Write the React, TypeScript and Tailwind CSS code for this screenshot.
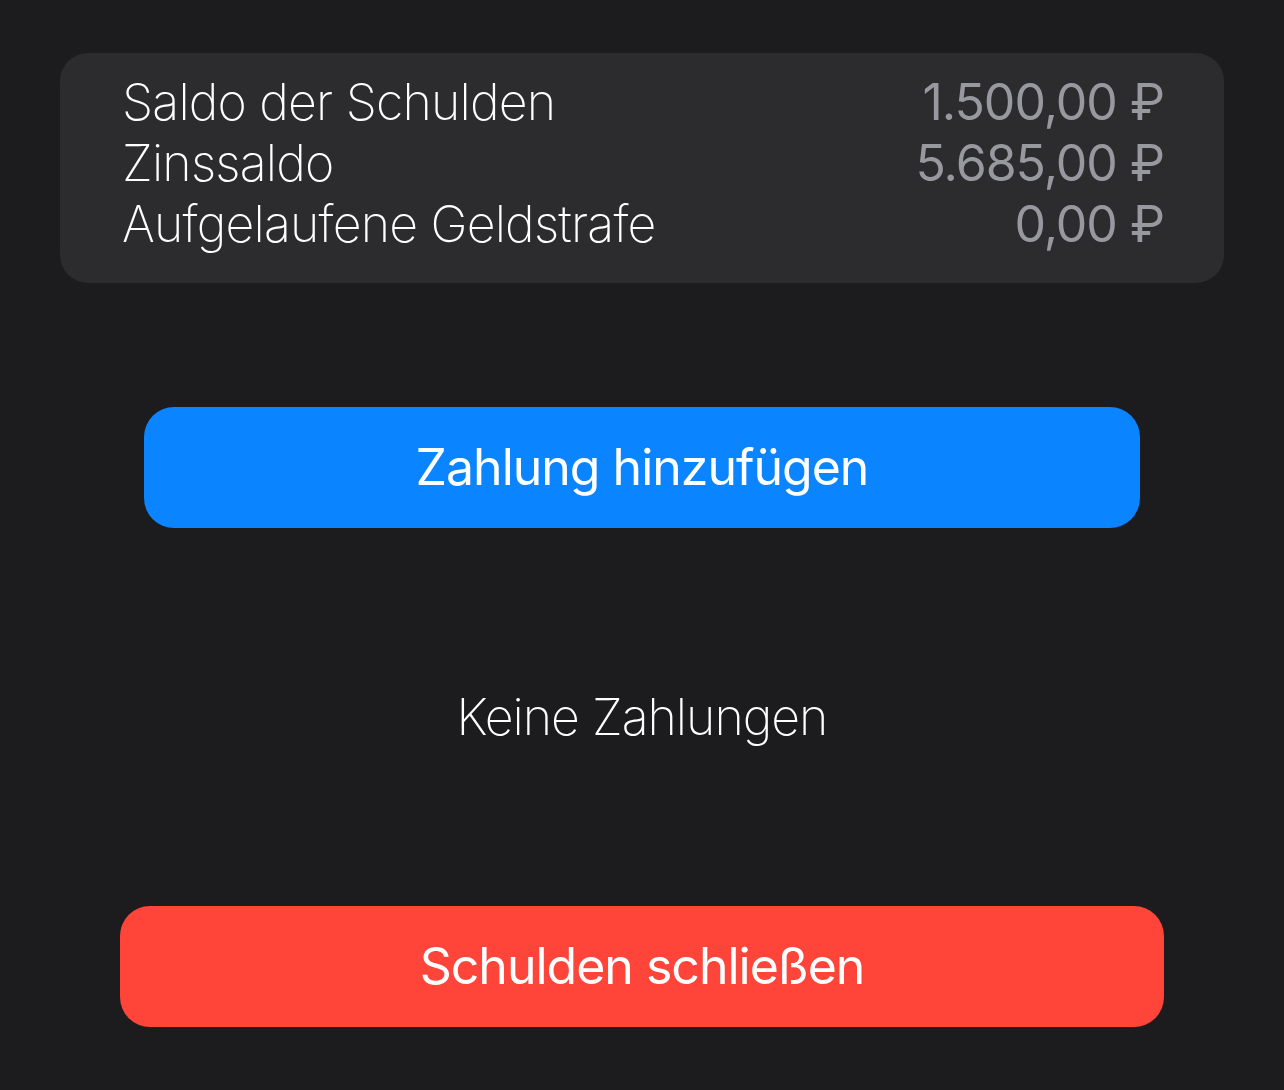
const rows = [
  { label: 'Saldo der Schulden', value: '1.500,00 ₽' },
  { label: 'Zinssaldo', value: '5.685,00 ₽' },
  { label: 'Aufgelaufene Geldstrafe', value: '0,00 ₽' },
];

const App = () => {
  return (
    <div
      className="min-h-[1090px] w-full bg-[#1c1c1e] flex flex-col"
      style={{ fontFamily: 'Inter, "Noto Sans", sans-serif' }}
    >
      {/* Summary card */}
      <div className="mt-[53px] mx-[60px] h-[230px] rounded-[28px] bg-[#2c2c2e] pl-[62px] pr-[60px] pt-[19px]">
        {rows.map((row) => (
          <div key={row.label} className="flex items-center justify-between h-[61px]">
            <span className="text-[50px] font-extralight text-white tracking-[-0.8px]">{row.label}</span>
            <span className="text-[50px] font-normal text-[#98989f] tracking-[-1px]">{row.value}</span>
          </div>
        ))}
      </div>

      {/* Add payment */}
      <button className="mt-[124px] mx-[144px] h-[121px] rounded-[30px] bg-[#0a84ff] text-white text-[50px] font-normal tracking-[-1px]">
        Zahlung hinzufügen
      </button>

      {/* Empty state */}
      <div className="h-[378px] flex items-center justify-center">
        <span className="text-[50px] font-extralight text-white tracking-[-1px]">Keine Zahlungen</span>
      </div>

      {/* Close debt */}
      <button className="mx-[120px] h-[121px] rounded-[30px] bg-[#ff453a] text-white text-[50px] font-normal tracking-[-1px]">
        Schulden schließen
      </button>
    </div>
  );
};

export default App;
